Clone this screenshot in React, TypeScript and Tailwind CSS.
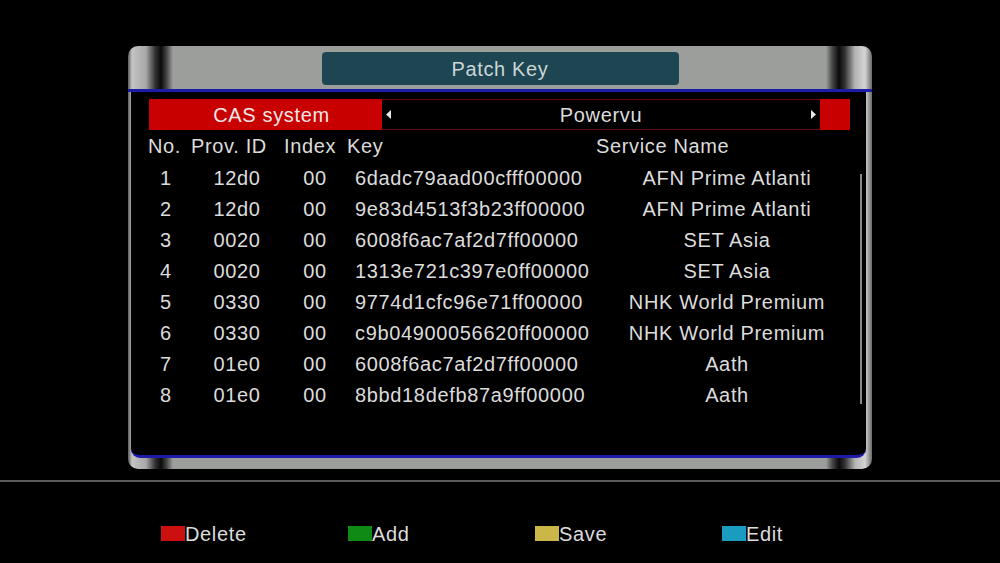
import React from "react";

interface PatchRow {
    no: number;
    provId: string;
    index: string;
    key: string;
    service: string;
}

const rows: PatchRow[] = [
    { no: 1, provId: "12d0", index: "00", key: "6dadc79aad00cfff00000", service: "AFN Prime Atlanti" },
    { no: 2, provId: "12d0", index: "00", key: "9e83d4513f3b23ff00000", service: "AFN Prime Atlanti" },
    { no: 3, provId: "0020", index: "00", key: "6008f6ac7af2d7ff00000", service: "SET Asia" },
    { no: 4, provId: "0020", index: "00", key: "1313e721c397e0ff00000", service: "SET Asia" },
    { no: 5, provId: "0330", index: "00", key: "9774d1cfc96e71ff00000", service: "NHK World Premium" },
    { no: 6, provId: "0330", index: "00", key: "c9b04900056620ff00000", service: "NHK World Premium" },
    { no: 7, provId: "01e0", index: "00", key: "6008f6ac7af2d7ff00000", service: "Aath" },
    { no: 8, provId: "01e0", index: "00", key: "8bbd18defb87a9ff00000", service: "Aath" },
];

const legend = [
    { label: "Delete", color: "bg-[#cc1010]" },
    { label: "Add", color: "bg-[#0f8a14]" },
    { label: "Save", color: "bg-[#cbb648]" },
    { label: "Edit", color: "bg-[#1a9cc0]" },
];

const App: React.FC = () => {
    return (
        <div className="w-[1000px] h-[563px] bg-black overflow-hidden text-[#dcdcdc] font-['Liberation_Sans',Arial,sans-serif] text-[20px] tracking-[0.65px]">
            {/* window frame */}
            <div className="ml-[128px] mt-[46px] w-[744px] h-[423px] flex flex-col rounded-[10px] bg-[linear-gradient(to_right,#5a5a5a_0px,#c4c4c4_4px,#a8a8a8_18px,#333333_27px,#0a0a0a_33px,#4a4a4a_39px,#9c9e9c_45px,#9c9e9c_698px,#4a4a4a_704px,#0a0a0a_711px,#333333_717px,#b4b4b4_727px,#d4d4d4_737px,#6a6a6a_744px)]">
                <div className="h-[43px] flex justify-center pt-[6px] shrink-0">
                    <div className="w-[357px] h-[33px] rounded-[4px] bg-[#1e4552] flex items-center justify-center text-[#ccd6d6]">
                        Patch Key
                    </div>
                </div>
                <div className="h-[3px] bg-[#1c1ca8] shrink-0" />
                <div className="relative ml-[3px] mr-[6px] h-[366px] bg-black rounded-b-[9px] border-b-[3px] border-[#1c1ca8] shrink-0">
                    {/* CAS system selector */}
                    <div className="flex h-[31px] mt-[7px] ml-[18px]">
                        <div className="w-[233px] bg-[#c80000] flex items-center justify-center pl-[12px] text-[#f0e8e8]">CAS system</div>
                        <div className="w-[438px] flex items-center justify-between px-[4px] border-y border-[#6a0808]">
                            <svg width="5" height="9" viewBox="0 0 5 9"><path d="M5 0 L0 4.5 L5 9 Z" fill="#e8e8e8" /></svg>
                            <span>Powervu</span>
                            <svg width="5" height="9" viewBox="0 0 5 9"><path d="M0 0 L5 4.5 L0 9 Z" fill="#e8e8e8" /></svg>
                        </div>
                        <div className="w-[30px] bg-[#c80000]" />
                    </div>

                    {/* header */}
                    <div className="flex h-[32px] items-center pl-[17px]">
                        <span className="w-[43px]">No.</span>
                        <span className="w-[93px]">Prov. ID</span>
                        <span className="w-[63px]">Index</span>
                        <span className="w-[249px]">Key</span>
                        <span>Service Name</span>
                    </div>

                    {rows.map((row) => (
                        <div key={row.no} className="flex h-[31px] items-center pl-[9px]">
                            <span className="w-[52px] text-center">{row.no}</span>
                            <span className="w-[90px] text-center">{row.provId}</span>
                            <span className="w-[66px] text-center">{row.index}</span>
                            <span className="w-[280px] pl-[7px]">{row.key}</span>
                            <span className="w-[198px] text-center">{row.service}</span>
                        </div>
                    ))}

                    {/* scrollbar */}
                    <div className="absolute left-[729px] top-[82px] w-[2px] h-[230px] bg-[#8a8a8a]" />
                </div>
                <div className="flex-1" />
            </div>

            <div className="mt-[11px] h-[2px] bg-[#5c5c5c]" />

            {/* color key legend */}
            <div className="flex pl-[161px] mt-[41px]">
                {legend.map((item) => (
                    <div key={item.label} className="w-[187px] flex items-end">
                        <div className={`w-[24px] h-[15px] mb-[4px] ${item.color}`} />
                        <span className="leading-[22px]">{item.label}</span>
                    </div>
                ))}
            </div>
        </div>
    );
};

export default App;
